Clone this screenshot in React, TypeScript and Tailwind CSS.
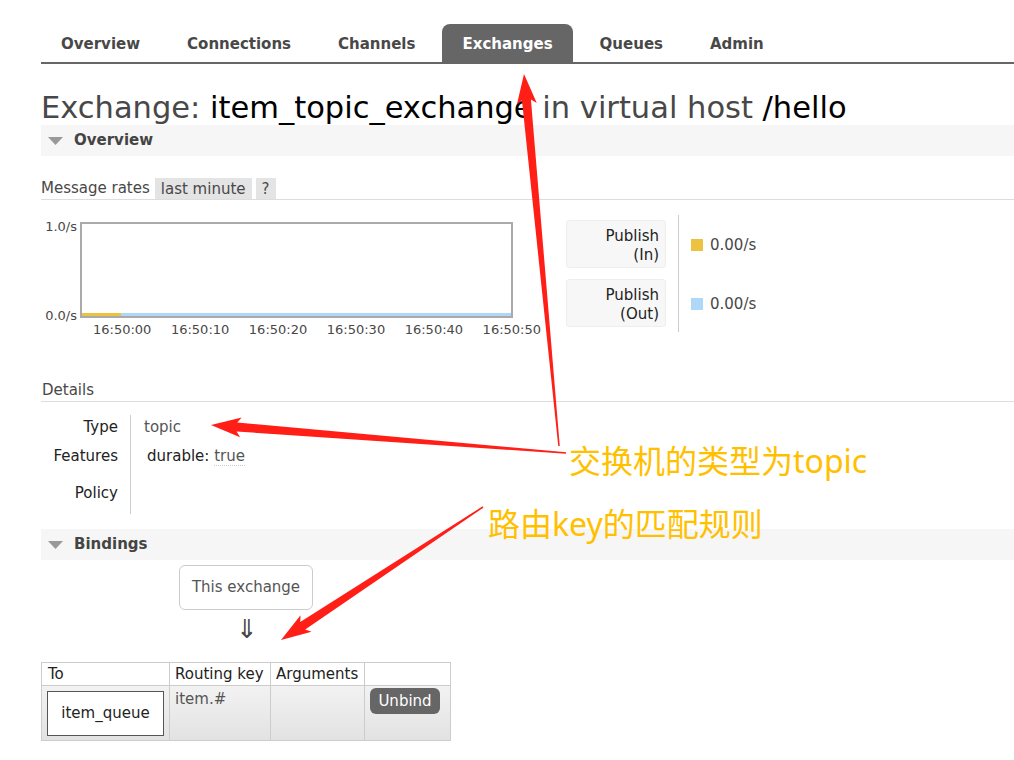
import React from 'react'

const tabs = ['Overview', 'Connections', 'Channels', 'Exchanges', 'Queues', 'Admin']
const times = ['16:50:00', '16:50:10', '16:50:20', '16:50:30', '16:50:40', '16:50:50']

// tapered annotation arrow, thin at the tail and thick near the head
function arrow(x1: number, y1: number, x2: number, y2: number) {
  const len = Math.hypot(x2 - x1, y2 - y1)
  const dx = (x2 - x1) / len
  const dy = (y2 - y1) / len
  const nx = -dy
  const ny = dx
  const hl = 26, hw = 20, sw = 9, tw = 1.5
  const bx = x2 - dx * hl
  const by = y2 - dy * hl
  const pts: [number, number][] = [
    [x1 + nx * tw / 2, y1 + ny * tw / 2],
    [bx + nx * sw / 2, by + ny * sw / 2],
    [bx - dx * 4 + nx * hw / 2, by - dy * 4 + ny * hw / 2],
    [x2, y2],
    [bx - dx * 4 - nx * hw / 2, by - dy * 4 - ny * hw / 2],
    [bx - nx * sw / 2, by - ny * sw / 2],
    [x1 - nx * tw / 2, y1 - ny * tw / 2],
  ]
  return pts.map(p => p.join(',')).join(' ')
}

function SectionHeader({ title }: { title: string }) {
  return (
    <div className="flex items-center h-[31px] bg-[#f6f6f6] pl-[7px] gap-[11px]">
      <svg width="15" height="10" viewBox="0 0 15 10"><polygon points="0,1 15,1 7.5,9" fill="#999" /></svg>
      <span className="font-bold text-[15px] text-[#444]">{title}</span>
    </div>
  )
}

export default function App() {
  return (
    <div className="relative w-[1014px] h-[760px] bg-white overflow-hidden text-[#484848]" style={{ fontFamily: '"DejaVu Sans", Verdana, "Noto Sans CJK SC", sans-serif' }}>
      <div className="pl-[41px]">
        {/* nav */}
        <div className="flex items-end h-[64px] border-b-2 border-[#666] pt-6">
          {tabs.map((t, i) => (
            <div
              key={t}
              className={`h-[38px] flex items-center px-5 pt-[2px] text-[15px] font-bold ${i > 0 ? 'ml-[7px]' : ''} ${t === 'Exchanges' ? 'bg-[#666] text-white rounded-t-lg' : 'text-[#484848]'}`}
            >
              {t}
            </div>
          ))}
        </div>

        <h1 className="mt-[27px] text-[30.5px] leading-[34px] text-[#484848] whitespace-nowrap">
          Exchange: <span className="text-black">item_topic_exchange</span> in virtual host <span className="text-black">/hello</span>
        </h1>

        <SectionHeader title="Overview" />

        <div className="mt-[22px] flex items-end h-[22px] border-b border-[#ddd] text-[15px]">
          <span className="pr-[5px]">Message rates</span>
          <span className="bg-[#e4e4e4] px-[6px] h-[21px] leading-[22px]">last minute</span>
          <span className="bg-[#e4e4e4] px-[6px] h-[21px] leading-[22px] ml-[4px]">?</span>
        </div>

        {/* chart + legend */}
        <div className="flex mt-[15px]">
          <div className="w-[500px]">
            <div className="flex">
              <div className="w-[39px] h-[108px] flex flex-col justify-between text-[13px] text-right pr-[3px] leading-[14px] pt-[5px]">
                <span>1.0/s</span>
                <span>0.0/s</span>
              </div>
              <div className="w-[433px] h-[96px] mt-[7px] border-2 border-[#aaa] flex items-end">
                <div className="w-[39px] h-[3px] bg-[#edc240]" />
                <div className="flex-1 h-[3px] bg-[#afd8f8]" />
              </div>
            </div>
            <div className="flex justify-between w-[448px] ml-[52px] -mt-[3px] text-[13px]">
              {times.map(t => <span key={t}>{t}</span>)}
            </div>
          </div>

          <div className="ml-[25px] flex">
            <div className="flex flex-col gap-[11px] pt-[5px]">
              {[['Publish', '(In)'], ['Publish', '(Out)']].map(([a, b]) => (
                <div key={b} className="w-[100px] h-[48px] bg-[#f7f7f7] border border-[#eee] rounded-[3px] text-right pr-[6px] text-[15px] leading-[19px] text-[#222] pt-[6px]">
                  <div>{a}</div>
                  <div>{b}</div>
                </div>
              ))}
            </div>
            <div className="ml-[12px] w-[1px] h-[117px] bg-[#ccc]" />
            <div className="flex flex-col pl-[12px] pt-[19px] gap-[36px] text-[15px]">
              <div className="flex items-center gap-[7px]"><span className="w-[12px] h-[12px] bg-[#edc240]" />0.00/s</div>
              <div className="flex items-center gap-[7px]"><span className="w-[12px] h-[12px] bg-[#afd8f8]" />0.00/s</div>
            </div>
          </div>
        </div>

        {/* details */}
        <div className="mt-[39px] text-[15px] border-b border-[#ddd] pl-[1px]">Details</div>
        <div className="flex mt-[13px] text-[15px]">
          <div className="w-[90px] border-r border-[#ccc] text-right pr-[12px] text-[#222]">
            <div className="h-[30px] pt-[1px]">Type</div>
            <div className="h-[37px]">Features</div>
            <div className="h-[32px]">Policy</div>
          </div>
          <div className="pl-[13px]">
            <div className="h-[30px] pt-[1px] text-[#555]">topic</div>
            <div className="h-[37px] pl-[3px] text-[#222]">durable: <span className="text-[#555] border-b border-dotted border-[#ccc]">true</span></div>
          </div>
        </div>

        <div className="mt-[15px]">
          <SectionHeader title="Bindings" />
        </div>

        <div className="flex flex-col items-start">
          <div className="ml-[138px] mt-[5px] w-[134px] h-[45px] border border-[#ccc] rounded-md flex items-center justify-center text-[15px] text-[#555]">
            This exchange
          </div>
          <div className="ml-[195px] mt-[4px] text-[26px] leading-[30px] text-[#444]">⇓</div>

          <table className="mt-[18px] border-collapse text-[15px] text-[#222]">
            <thead>
              <tr className="h-[23px]">
                <th className="w-[128px] border border-[#ccc] text-left font-normal px-[6px] leading-[20px]">To</th>
                <th className="w-[101px] border border-[#ccc] text-left font-normal px-[5px] leading-[20px]">Routing key</th>
                <th className="w-[94px] border border-[#ccc] text-left font-normal px-[5px] leading-[20px]">Arguments</th>
                <th className="w-[86px] border border-[#ccc]" />
              </tr>
            </thead>
            <tbody>
              <tr className="h-[55px] bg-gradient-to-b from-[#f2f2f2] to-[#e2e2e2]">
                <td className="border border-[#ccc] px-[5px] py-[2px]">
                  <div className="w-[117px] h-[45px] border border-[#555] bg-white flex items-center justify-center">item_queue</div>
                </td>
                <td className="border border-[#ccc] align-top px-[5px] pt-[2px] text-[#555]">item.#</td>
                <td className="border border-[#ccc]" />
                <td className="border border-[#ccc] align-top pl-[5px] pt-[2px]">
                  <div className="w-[70px] h-[26px] bg-[#666] rounded-md text-white flex items-center justify-center">Unbind</div>
                </td>
              </tr>
            </tbody>
          </table>
        </div>
      </div>

      {/* annotations */}
      <svg className="absolute inset-0 pointer-events-none" width="1014" height="760">
        <polygon points={arrow(559, 446, 524, 74)} fill="#ff1f17" />
        <polygon points={arrow(566, 453, 211, 425)} fill="#ff1f17" />
        <polygon points={arrow(483, 507, 281, 640)} fill="#ff1f17" />
      </svg>
      <div className="absolute left-[569px] top-[441px] text-[32px] leading-[40px] text-[#ffc000] whitespace-nowrap" style={{ fontFamily: '"Noto Sans", "Noto Sans CJK SC", sans-serif' }}>
        交换机的类型为topic
      </div>
      <div className="absolute left-[488px] top-[504px] text-[32px] leading-[40px] text-[#ffc000] whitespace-nowrap" style={{ fontFamily: '"Noto Sans", "Noto Sans CJK SC", sans-serif' }}>
        路由key的匹配规则
      </div>
    </div>
  )
}
